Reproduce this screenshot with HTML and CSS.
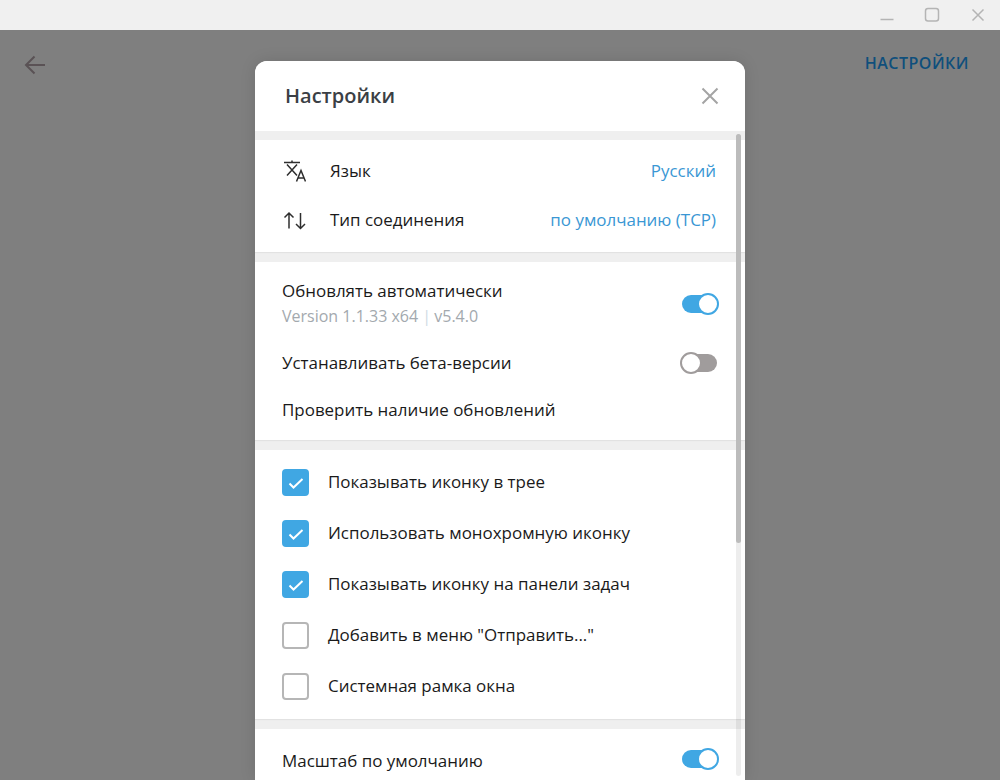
FILE: index.html
```html
<!DOCTYPE html>
<html lang="ru">
<head>
<meta charset="utf-8">
<title>Настройки</title>
<link rel="stylesheet" href="styles.css">
</head>
<body>
<div class="titlebar">
  <svg class="win-icon win-min" width="14" height="14" viewBox="0 0 14 14"><path d="M0.500 11.500h13"/></svg>
  <svg class="win-icon" width="16" height="16" viewBox="0 0 16 16"><rect x="1.500" y="1.500" width="13" height="12.500" rx="2.500"/></svg>
  <svg class="win-icon" width="14" height="14" viewBox="0 0 14 14"><path d="M1.500 1.500l11 11M12.500 1.500l-11 11"/></svg>
</div>
<div class="stage">
  <div class="topbar">
    <svg class="back" width="22" height="20" viewBox="0 0 22 20"><path d="M21 10H2M10.500 1.500L2 10l8.500 8.500"/></svg>
    <span class="top-title">НАСТРОЙКИ</span>
  </div>
  <div class="modal">
    <div class="modal-head">
      <h1 class="modal-title">Настройки</h1>
      <svg class="modal-close" width="18" height="18" viewBox="0 0 18 18"><path d="M1.500 1.500l15 15M16.500 1.500l-15 15"/></svg>
    </div>
    <section class="group group-a">
      <div class="row-icon">
        <svg class="row-svg" width="24" height="25" viewBox="0 0 24 25"><path d="M2 4.500h16M10 2.500v2M5 6.500l10 11M15 6.500l-10 11"/><path d="M14.500 23.500l4.500-11 4.500 11M16 20h6"/></svg>
        <span class="label">Язык</span><span class="label value">Русский</span>
      </div>
      <div class="row-icon">
        <svg class="row-svg" width="24" height="25" viewBox="0 0 24 25"><path d="M7 21.500V6M2.500 10.500L7 6l4.500 4.500M18.500 6v15.500M14 17l4.500 4.500L23 17"/></svg>
        <span class="label">Тип соединения</span><span class="label value">по умолчанию (TCP)</span>
      </div>
    </section>
    <section class="group group-b">
      <div class="row-update">
        <div class="stack">
          <span class="label">Обновлять автоматически</span>
          <span class="version">Version 1.1.33 x64 <i class="sep">|</i> v5.4.0</span>
        </div>
        <span class="toggle on"></span>
      </div>
      <div class="row-plain row-beta">
        <span class="label">Устанавливать бета-версии</span>
        <span class="toggle off"></span>
      </div>
      <div class="row-plain row-check"><span class="label">Проверить наличие обновлений</span></div>
    </section>
    <section class="group group-c">
      <div class="row-check-box"><span class="box checked"><svg width="16" height="16" viewBox="0 0 16 16"><path d="M1.500 8.500l4 4 9-8.500"/></svg></span><span class="label">Показывать иконку в трее</span></div>
      <div class="row-check-box"><span class="box checked"><svg width="16" height="16" viewBox="0 0 16 16"><path d="M1.500 8.500l4 4 9-8.500"/></svg></span><span class="label">Использовать монохромную иконку</span></div>
      <div class="row-check-box"><span class="box checked"><svg width="16" height="16" viewBox="0 0 16 16"><path d="M1.500 8.500l4 4 9-8.500"/></svg></span><span class="label">Показывать иконку на панели задач</span></div>
      <div class="row-check-box"><span class="box"></span><span class="label">Добавить в меню "Отправить..."</span></div>
      <div class="row-check-box"><span class="box"></span><span class="label">Системная рамка окна</span></div>
    </section>
    <section class="group group-d">
      <div class="row-plain row-scale">
        <span class="label">Масштаб по умолчанию</span>
        <span class="toggle on"></span>
      </div>
    </section>
    <div class="scroll-track"><div class="scroll-thumb"></div></div>
  </div>
</div>
</body>
</html>
```
FILE: styles.css
```css
*, *::after { box-sizing: border-box; }
html, body { margin: 0; height: 100%; overflow: hidden; }
body {
  width: 1000px;
  height: 780px;
  display: flex;
  flex-direction: column;
  font-family: "Open Sans", "Liberation Sans", sans-serif;
  font-size: 16px;
  color: #1a1a1a;
  background: #7f7f7f;
}
.titlebar {
  height: 30px;
  flex: none;
  background: #f0f0f0;
  display: flex;
  align-items: center;
  justify-content: flex-end;
  gap: 31px;
  padding: 0 15px 0 0;
}
.win-icon { fill: none; stroke: #b4b4b4; stroke-width: 1.500; }
.win-min { margin-right: -1px; }
.stage { flex: 1; position: relative; background: #7f7f7f; display: flex; justify-content: center; min-height: 0; }
.topbar {
  position: absolute;
  left: 0; right: 0; top: 0;
  height: 70px;
  display: flex;
  align-items: center;
  justify-content: space-between;
  padding: 0 31px 0 24px;
}
.back { fill: none; stroke: #5a5255; stroke-width: 2; }
.top-title { font-size: 16px; font-weight: 600; letter-spacing: 0.5px; color: #0f4f7c; margin-top: -4px; }
.modal {
  position: relative;
  margin-top: 31px;
  width: 490px;
  height: 719px;
  background: #efefef;
  border-radius: 12px 12px 0 0;
  overflow: hidden;
  box-shadow: 0 0 16px rgba(0,0,0,0.12);
  flex: none;
  display: flex;
  flex-direction: column;
  gap: 10px;
}
.modal-head {
  height: 70px;
  flex: none;
  background: #fff;
  display: flex;
  align-items: center;
  justify-content: space-between;
  padding: 0 26px 0 30px;
  margin-bottom: -1px;
}
.modal-title { margin: -2px 0 0; font-size: 20px; font-weight: 600; color: #3b3f45; }
.modal-close { fill: none; stroke: #a4a4a4; stroke-width: 2; }
.group { background: #fff; flex: none; box-shadow: 0 1px 1px rgba(0,0,0,0.05); }
.label { font-size: 16.95px; }
.group-a { height: 112px; padding: 6px 29px 0 27px; }
.row-icon { height: 49px; display: flex; align-items: center; }
.row-svg { fill: none; stroke: #2e2e2e; stroke-width: 1.500; margin-right: 24px; flex: none; }
.row-icon .value { margin-left: auto; color: #3a97d4; }
.group-b { height: 178px; padding: 15px 27px 0 27px; }
.row-update, .row-plain { display: flex; align-items: center; justify-content: space-between; }
.row-update { height: 52px; }
.stack { display: flex; flex-direction: column; gap: 3px; line-height: 22px; }
.version { color: #a3a9ae; line-height: 22px; }
.sep { font-style: normal; color: #cfdbe4; margin-right: -1px; }
.row-update .toggle { margin-top: 2px; }
.row-beta { height: 47px; margin-top: 10px; }
.row-check { height: 47px; }
.group-c { height: 269px; padding: 6px 0 0 27px; }
.row-check-box { height: 51px; display: flex; align-items: center; gap: 19px; }
.box {
  width: 27px;
  height: 27px;
  margin-top: 2px;
  flex: none;
  border: 2px solid #b6b6b6;
  border-radius: 4px;
  display: flex;
  align-items: center;
  justify-content: center;
}
.box.checked { background: #40a7e3; border-color: #40a7e3; }
.box svg { fill: none; stroke: #fff; stroke-width: 2; }
.group-d { flex: 1; padding: 9px 27px 0 27px; }
.row-scale { height: 44px; }
.row-scale .toggle { margin-top: -2px; }
.toggle { position: relative; display: block; width: 36px; height: 18px; border-radius: 9px; flex: none; }
.toggle::after {
  content: "";
  position: absolute;
  top: -2px;
  width: 22px;
  height: 22px;
  border-radius: 50%;
  background: #fff;
  border: 2px solid;
}
.toggle.on { background: #40a7e3; }
.toggle.on::after { right: -1px; border-color: #40a7e3; }
.toggle.off { background: #a09c9c; margin-right: 1px; }
.toggle.off::after { left: -1px; border-color: #a09c9c; }
.scroll-track {
  position: absolute;
  right: 4px;
  top: 73px;
  width: 5px;
  height: 642px;
  border-radius: 3px;
  background: rgba(0,0,0,0.07);
}
.scroll-thumb { height: 409px; border-radius: 3px; background: #bcbcbc; }
```
